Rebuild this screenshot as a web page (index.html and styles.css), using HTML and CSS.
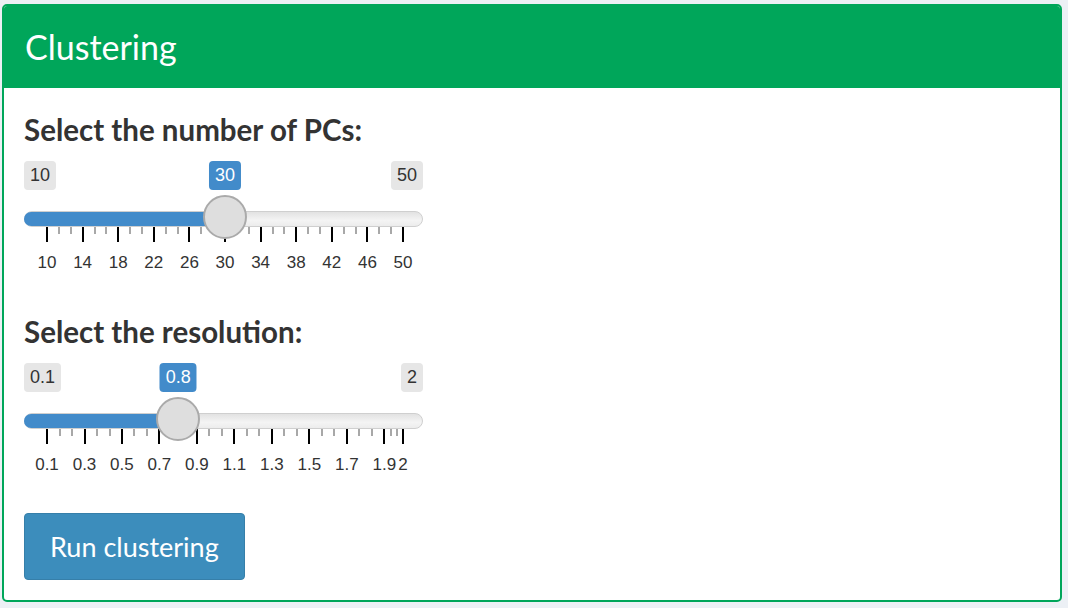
FILE: index.html
```html
<!DOCTYPE html>
<html>
<head>
<meta charset="utf-8">
<link rel="stylesheet" href="styles.css">
</head>
<body>
<div class="box">
  <div class="box-header"><h3 class="box-title">Clustering</h3></div>
  <div class="box-body">
    <div class="form-group">
      <label class="control-label">Select the number of PCs:</label>
      <div class="slider">
        <span class="badge min">10</span>
        <span class="badge max">50</span>
        <span class="badge from" style="left:201px">30</span>
        <div class="track"></div>
        <div class="bar" style="width:201px"></div>
        <div class="grid">
          <span class="pol big" style="left:23px"></span>
          <span class="pol" style="left:34.9px"></span><span class="pol" style="left:46.7px"></span>
          <span class="pol big" style="left:58.6px"></span>
          <span class="pol" style="left:70.5px"></span><span class="pol" style="left:82.3px"></span>
          <span class="pol big" style="left:94.2px"></span>
          <span class="pol" style="left:106.1px"></span><span class="pol" style="left:117.9px"></span>
          <span class="pol big" style="left:129.8px"></span>
          <span class="pol" style="left:141.7px"></span><span class="pol" style="left:153.5px"></span>
          <span class="pol big" style="left:165.4px"></span>
          <span class="pol" style="left:177.3px"></span><span class="pol" style="left:189.1px"></span>
          <span class="pol big" style="left:201px"></span>
          <span class="pol" style="left:212.9px"></span><span class="pol" style="left:224.7px"></span>
          <span class="pol big" style="left:236.6px"></span>
          <span class="pol" style="left:248.5px"></span><span class="pol" style="left:260.3px"></span>
          <span class="pol big" style="left:272.2px"></span>
          <span class="pol" style="left:284.1px"></span><span class="pol" style="left:295.9px"></span>
          <span class="pol big" style="left:307.8px"></span>
          <span class="pol" style="left:319.7px"></span><span class="pol" style="left:331.5px"></span>
          <span class="pol big" style="left:343.4px"></span>
          <span class="pol" style="left:355.3px"></span><span class="pol" style="left:367.1px"></span>
          <span class="pol big" style="left:379px"></span>
          <span class="num" style="left:23px">10</span>
          <span class="num" style="left:58.6px">14</span>
          <span class="num" style="left:94.2px">18</span>
          <span class="num" style="left:129.8px">22</span>
          <span class="num" style="left:165.4px">26</span>
          <span class="num" style="left:201px">30</span>
          <span class="num" style="left:236.6px">34</span>
          <span class="num" style="left:272.2px">38</span>
          <span class="num" style="left:307.8px">42</span>
          <span class="num" style="left:343.4px">46</span>
          <span class="num" style="left:379px">50</span>
        </div>
        <span class="handle" style="left:201px"></span>
      </div>
    </div>
    <div class="form-group">
      <label class="control-label">Select the resolution:</label>
      <div class="slider">
        <span class="badge min">0.1</span>
        <span class="badge max">2</span>
        <span class="badge from" style="left:154.2px">0.8</span>
        <div class="track"></div>
        <div class="bar" style="width:154.2px"></div>
        <div class="grid">
          <span class="pol big" style="left:23px"></span>
          <span class="pol" style="left:35.5px"></span><span class="pol" style="left:48px"></span>
          <span class="pol big" style="left:60.5px"></span>
          <span class="pol" style="left:73px"></span><span class="pol" style="left:85.5px"></span>
          <span class="pol big" style="left:97.9px"></span>
          <span class="pol" style="left:110.4px"></span><span class="pol" style="left:122.9px"></span>
          <span class="pol big" style="left:135.4px"></span>
          <span class="pol" style="left:147.9px"></span><span class="pol" style="left:160.4px"></span>
          <span class="pol big" style="left:172.9px"></span>
          <span class="pol" style="left:185.4px"></span><span class="pol" style="left:197.9px"></span>
          <span class="pol big" style="left:210.4px"></span>
          <span class="pol" style="left:222.9px"></span><span class="pol" style="left:235.4px"></span>
          <span class="pol big" style="left:247.8px"></span>
          <span class="pol" style="left:260.3px"></span><span class="pol" style="left:272.8px"></span>
          <span class="pol big" style="left:285.3px"></span>
          <span class="pol" style="left:297.8px"></span><span class="pol" style="left:310.3px"></span>
          <span class="pol big" style="left:322.8px"></span>
          <span class="pol" style="left:335.3px"></span><span class="pol" style="left:347.8px"></span>
          <span class="pol big" style="left:360.3px"></span>
          <span class="pol" style="left:366.5px"></span><span class="pol" style="left:372.8px"></span>
          <span class="pol big" style="left:379px"></span>
          <span class="num" style="left:23px">0.1</span>
          <span class="num" style="left:60.5px">0.3</span>
          <span class="num" style="left:97.9px">0.5</span>
          <span class="num" style="left:135.4px">0.7</span>
          <span class="num" style="left:172.9px">0.9</span>
          <span class="num" style="left:210.4px">1.1</span>
          <span class="num" style="left:247.8px">1.3</span>
          <span class="num" style="left:285.3px">1.5</span>
          <span class="num" style="left:322.8px">1.7</span>
          <span class="num" style="left:360.3px">1.9</span>
          <span class="num" style="left:379px">2</span>
        </div>
        <span class="handle" style="left:154.2px"></span>
      </div>
    </div>
    <button class="btn">Run clustering</button>
  </div>
</div>
</body>
</html>
```
FILE: styles.css
```css
html, body {
  margin: 0;
  padding: 0;
  background: #ecf0f5;
}
body {
  padding: 4px 6px 0 2px;
  font-family: "Lato", "Open Sans", sans-serif;
  color: #333;
}
.box {
  box-sizing: border-box;
  height: 598px;
  border: 2px solid #00a65a;
  border-radius: 5px;
  background: #fff;
  overflow: hidden;
}
.box-header {
  height: 82px;
  background: #00a65a;
  display: flex;
  align-items: center;
  padding: 0 21px;
}
.box-title {
  margin: 0;
  font-weight: 400;
  font-size: 34px;
  line-height: 1;
  color: #fff;
}
.box-body {
  padding: 25px 20px 0 20px;
}
.form-group {
  margin-bottom: 39px;
}
.control-label {
  display: block;
  font-weight: 700;
  font-size: 29.5px;
  line-height: 34px;
  color: #333;
}
.slider {
  position: relative;
  margin-top: 14px;
  width: 399px;
  height: 115px;
  font-family: "Liberation Sans", Arial, sans-serif;
}
.badge {
  position: absolute;
  top: 0;
  height: 29px;
  line-height: 29px;
  padding: 0 6px;
  border-radius: 4px;
  font-size: 18px;
  background: #e6e6e6;
  color: #333;
}
.badge.min { left: 0; }
.badge.max { right: 0; }
.badge.from {
  background: #428bca;
  color: #fff;
  transform: translateX(-50%);
}
.track {
  position: absolute;
  left: 0;
  right: 0;
  top: 50px;
  height: 16px;
  box-sizing: border-box;
  border: 1px solid #cfcfcf;
  border-radius: 8px;
  background: linear-gradient(#e2e2e2, #f4f4f4 60%, #ececec);
}
.bar {
  position: absolute;
  left: 0;
  top: 51px;
  height: 14px;
  border-radius: 7px 0 0 7px;
  background: #428bca;
}
.grid {
  position: absolute;
  left: 0;
  right: 0;
  top: 66px;
  height: 49px;
}
.pol {
  position: absolute;
  top: 0;
  width: 2px;
  height: 7px;
  margin-left: -1px;
  background: #a8a8a8;
}
.pol.big {
  height: 15px;
  background: #000;
}
.num {
  position: absolute;
  top: 26px;
  font-size: 17px;
  line-height: 20px;
  color: #333;
  transform: translateX(-50%);
  white-space: nowrap;
}
.handle {
  position: absolute;
  top: 34px;
  width: 40px;
  height: 40px;
  margin-left: -22px;
  border: 2px solid #aaa;
  border-radius: 50%;
  background: #dedede;
}
.btn {
  display: block;
  margin-top: -4px;
  height: 67px;
  padding: 0 25px;
  border: 1px solid #367fa9;
  border-radius: 4px;
  background: #3c8dbc;
  color: #fff;
  font-family: "Lato", "Open Sans", sans-serif;
  font-size: 27px;
}
```
